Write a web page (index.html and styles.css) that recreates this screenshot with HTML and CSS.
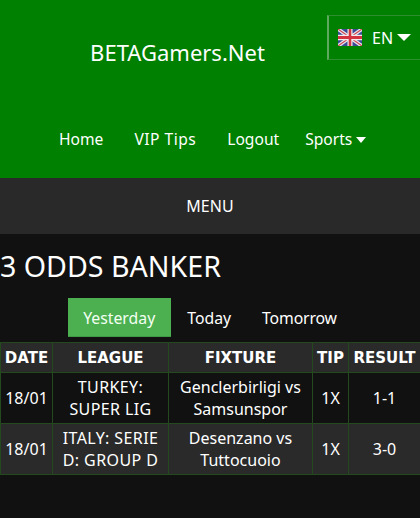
FILE: index.html
```html
<!DOCTYPE html>
<html lang="en">
<head>
<meta charset="utf-8">
<title>BETAGamers.Net</title>
<link rel="stylesheet" href="styles.css">
</head>
<body>
<header class="top">
  <div class="brand">BETAGamers.Net</div>
  <div class="lang">
    <svg class="flag" viewBox="0 0 24 16" width="24" height="17" preserveAspectRatio="none">
      <rect width="24" height="16" fill="#3b4a94"/>
      <path d="M0 0L24 16M24 0L0 16" stroke="#e8e8f0" stroke-width="3.4"/>
      <path d="M0 0L24 16M24 0L0 16" stroke="#d0434f" stroke-width="1.1"/>
      <path d="M12 0V16M0 8H24" stroke="#f2eef0" stroke-width="5"/>
      <path d="M12 0V16M0 8H24" stroke="#d3343f" stroke-width="2.6"/>
    </svg>
    <span class="lang-code">EN</span>
    <span class="caret caret-lg"></span>
  </div>
  <nav class="nav">
    <a class="nav-link">Home</a>
    <a class="nav-link nav-vip">VIP Tips</a>
    <a class="nav-link">Logout</a>
    <a class="nav-link nav-sports">Sports <span class="caret"></span></a>
  </nav>
</header>
<div class="menu">MENU</div>
<main class="content">
  <h1 class="title">3 ODDS BANKER</h1>
  <div class="tabs">
    <a class="tab tab-active">Yesterday</a>
    <a class="tab tab-today">Today</a>
    <a class="tab tab-tomorrow">Tomorrow</a>
  </div>
  <table class="tips">
    <thead>
      <tr><th class="c-date">DATE</th><th class="c-league">LEAGUE</th><th class="c-fixture">FIXTURE</th><th class="c-tip">TIP</th><th class="c-result">RESULT</th></tr>
    </thead>
    <tbody>
      <tr class="dark"><td>18/01</td><td class="league">TURKEY: SUPER LIG</td><td>Genclerbirligi vs Samsunspor</td><td>1X</td><td>1-1</td></tr>
      <tr class="light"><td>18/01</td><td class="league">ITALY: SERIE D: GROUP D</td><td>Desenzano vs Tuttocuoio</td><td>1X</td><td>3-0</td></tr>
    </tbody>
  </table>
</main>
</body>
</html>
```
FILE: styles.css
```css
* { box-sizing: border-box; }
html, body { margin: 0; height: 100%; }
body {
  background: #111111;
  color: #fff;
  font-family: "Noto Sans", "Open Sans", sans-serif;
  font-size: 16px;
  overflow: hidden;
}
.top {
  position: relative;
  height: 178px;
  background: #008000;
}
.brand {
  width: 355px;
  padding-top: 36px;
  height: 128px;
  text-align: center;
  font-size: 22px;
  line-height: 32px;
}
.lang {
  position: absolute;
  top: 15px;
  left: 327px;
  width: 93px;
  height: 45px;
  display: flex;
  align-items: center;
  padding-left: 9px;
  border: 1px solid #2e8f2e;
  border-left: 2px solid #5fa85f;
  border-right: 0;
  font-size: 16px;
}
.flag { display: block; }
.lang-code { margin-left: 10px; }
.caret {
  display: inline-block;
  width: 0;
  height: 0;
  border-left: 5px solid transparent;
  border-right: 5px solid transparent;
  border-top: 6px solid #fff;
  vertical-align: 2px;
}
.caret-lg {
  margin-left: 4px;
  border-left-width: 7px;
  border-right-width: 7px;
  border-top-width: 7px;
}
.nav {
  display: flex;
  gap: 31px;
  padding-left: 59px;
  font-size: 15.6px;
  line-height: 22px;
  height: 22px;
}
.nav-vip { letter-spacing: 0.5px; }
.nav-sports { margin-left: -5px; }
.menu {
  height: 56px;
  background: #292929;
  text-align: center;
  line-height: 56px;
}
.title {
  margin: 0;
  padding-top: 12px;
  font-size: 28.6px;
  font-weight: 400;
  line-height: 40px;
  height: 64px;
}
.tabs {
  display: flex;
  justify-content: center;
  height: 44px;
  font-size: 15.8px;
}
.tab {
  padding: 0 15.5px;
  line-height: 40px;
}
.tab-active {
  height: 39px;
  background: #4caf50;
  color: #f2fff2;
  border-bottom: 1px solid #3f9a45;
}
.tab-today { margin-left: 1px; }
.tab-tomorrow { letter-spacing: -0.15px; }
.tips {
  width: 420px;
  table-layout: fixed;
  border-collapse: collapse;
  text-align: center;
}
.tips th, .tips td {
  border: 1px solid #24491f;
  padding: 0;
}
.tips th {
  height: 30px;
  background: #2a2a2a;
  font-family: "DejaVu Sans", sans-serif;
  font-weight: 700;
  font-size: 15px;
  line-height: 28px;
  white-space: nowrap;
}
.tips td {
  height: 51px;
  line-height: 22px;
  padding: 0 4px;
}
.tips .league { letter-spacing: 0.4px; padding: 0 2px; }
.dark td { background: #111111; }
.light td { background: #2a2a2a; }
.c-date { width: 52px; }
.c-league { width: 116px; }
.c-fixture { width: 144px; }
.c-tip { width: 36px; }
.c-result { width: 72px; }
```
